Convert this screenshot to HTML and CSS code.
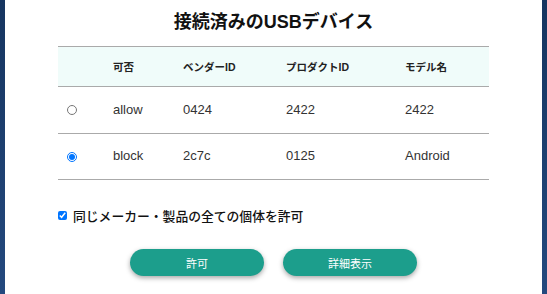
FILE: index.html
```html
<!DOCTYPE html>
<html lang="ja">
<head>
<meta charset="utf-8">
<title>接続済みのUSBデバイス</title>
<link rel="stylesheet" href="styles.css">
</head>
<body>
<div class="panel">
  <h1 class="title">接続済みのUSBデバイス</h1>
  <table class="devices">
    <colgroup>
      <col class="c-sel"><col class="c-perm"><col class="c-vendor"><col class="c-product"><col class="c-model">
    </colgroup>
    <thead>
      <tr><th></th><th>可否</th><th>ベンダーID</th><th>プロダクトID</th><th>モデル名</th></tr>
    </thead>
    <tbody>
      <tr class="r1"><td><input type="radio" name="dev" class="radio"></td><td>allow</td><td>0424</td><td>2422</td><td>2422</td></tr>
      <tr class="r2"><td><input type="radio" name="dev" class="radio" checked></td><td>block</td><td>2c7c</td><td>0125</td><td>Android</td></tr>
    </tbody>
  </table>
  <label class="check-row"><input type="checkbox" class="check" checked><span>同じメーカー・製品の全ての個体を許可</span></label>
  <div class="actions">
    <button class="btn">許可</button>
    <button class="btn">詳細表示</button>
  </div>
</div>
</body>
</html>
```

FILE: styles.css
```css
html, body {
  margin: 0;
  padding: 0;
  height: 100%;
}
body {
  background: linear-gradient(180deg, #163560 0%, #24497e 100%);
  font-family: "Liberation Sans", "Noto Sans CJK JP", sans-serif;
  color: #222;
  overflow: hidden;
}
.panel {
  background: #fff;
  margin: 0 5px;
  height: 100%;
  padding-top: 9px;
  box-sizing: border-box;
  display: flex;
  flex-direction: column;
  align-items: center;
}
.title {
  margin: 0;
  font-size: 18px;
  line-height: 26px;
  font-weight: 700;
  color: #111;
}
.devices {
  margin-top: 11px;
  width: 431px;
  border-collapse: collapse;
  table-layout: fixed;
}
.c-sel { width: 55px; }
.c-perm { width: 70px; }
.c-vendor { width: 103px; }
.c-product { width: 119px; }
.c-model { width: 84px; }
.devices thead tr {
  background: #f0fcfa;
  border-top: 1px solid #aaa;
  border-bottom: 1px solid #aaa;
}
.devices th {
  height: 39px;
  padding: 0;
  text-align: left;
  font-size: 10.5px;
  font-weight: 700;
  color: #222;
}
.devices td {
  padding: 0 0 2px;
  font-size: 13px;
  color: #333;
}
.devices tbody tr {
  border-bottom: 1px solid #aaa;
}
.r1 td { height: 44px; }
.r2 td { height: 43px; }
.radio {
  margin: 0 0 0 9px;
  width: 10px;
  height: 10px;
  vertical-align: middle;
}
.check-row {
  align-self: flex-start;
  margin: 26px 0 0 53px;
  display: flex;
  align-items: center;
  font-size: 12.8px;
  font-weight: 500;
  color: #111;
}
.check {
  margin: 0 6px 0 0;
  width: 9px;
  height: 9px;
}
.actions {
  display: flex;
  gap: 19px;
  margin-top: 24px;
}
.btn {
  width: 134px;
  height: 27px;
  border: none;
  border-radius: 14px;
  background: #1c9e8c;
  color: #fff;
  font-family: "Liberation Sans", "Noto Sans CJK JP", sans-serif;
  font-size: 11px;
  box-shadow: 0 2px 5px rgba(0, 0, 0, 0.35);
  padding: 0;
}
```
